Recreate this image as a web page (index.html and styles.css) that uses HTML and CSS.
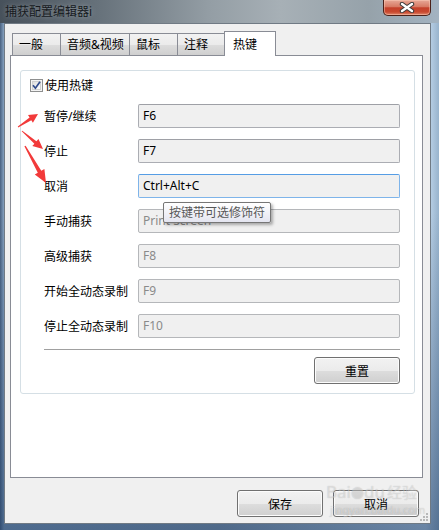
FILE: index.html
```html
<!DOCTYPE html>
<html lang="zh-CN">
<head>
    <meta charset="UTF-8">
    <meta name="viewport" content="width=device-width, initial-scale=1.0">
    <title>捕获配置编辑器</title>
    <link rel="stylesheet" href="styles.css">
</head>
<body>
    <div class="window">
        <div class="titlebar">
            <span class="title">捕获配置编辑器i</span>
            <div class="close-btn">
                <svg width="18" height="11" viewBox="0 0 18 11">
                    <path d="M4 2 L14 9 M14 2 L4 9" stroke="#3b3b3b" stroke-width="4.4" stroke-linecap="round"/>
                    <path d="M4 2 L14 9 M14 2 L4 9" stroke="#ffffff" stroke-width="2.4" stroke-linecap="round"/>
                </svg>
            </div>
        </div>

        <div class="client">
            <div class="tabs">
                <div class="tab tab-general">一般</div>
                <div class="tab tab-media">音频&amp;视频</div>
                <div class="tab tab-mouse">鼠标</div>
                <div class="tab tab-note">注释</div>
                <div class="tab tab-active">热键</div>
            </div>

            <div class="pane">
                <div class="groupbox">
                    <label class="check-row">
                        <svg class="checkbox" width="13" height="13" viewBox="0 0 13 13">
                            <defs>
                                <linearGradient id="cbg" x1="0" y1="0" x2="1" y2="1">
                                    <stop offset="0" stop-color="#dcdcdc"/>
                                    <stop offset="1" stop-color="#ffffff"/>
                                </linearGradient>
                            </defs>
                            <rect x="0.5" y="0.5" width="12" height="12" fill="#f4f4f4" stroke="#8e8f8f"/>
                            <rect x="2.5" y="2.5" width="8" height="8" fill="url(#cbg)" stroke="#d0d0d0"/>
                            <path d="M3 6.3 L5.4 9.2 L10 2.8" fill="none" stroke="#2f4a8c" stroke-width="1.7"/>
                        </svg>
                        <span>使用热键</span>
                    </label>

                    <div class="form">
                        <span class="label">暂停/继续</span>
                        <div class="field">F6</div>

                        <span class="label">停止</span>
                        <div class="field">F7</div>

                        <span class="label">取消</span>
                        <div class="field-wrap">
                            <div class="field focused">Ctrl+Alt+C</div>
                            <div class="tooltip">按键带可选修饰符</div>
                        </div>

                        <span class="label">手动捕获</span>
                        <div class="field disabled">Print Screen</div>

                        <span class="label">高级捕获</span>
                        <div class="field disabled">F8</div>

                        <span class="label">开始全动态录制</span>
                        <div class="field disabled">F9</div>

                        <span class="label">停止全动态录制</span>
                        <div class="field disabled">F10</div>
                    </div>

                    <div class="separator"></div>

                    <div class="reset-row">
                        <button class="btn">重置</button>
                    </div>
                </div>
            </div>

            <div class="footer">
                <button class="btn">保存</button>
                <button class="btn">取消</button>
            </div>
        </div>

        <!-- annotation arrows drawn on top of the dialog -->
        <svg class="arrows" width="439" height="530" viewBox="0 0 439 530">
            <polygon points="18.2,127.4 31.3,120.2 32.9,122.7 38,114 28,115.1 29.6,117.6 17.8,126.6" fill="#f23a3a"/>
            <polygon points="21.7,131.3 34.4,143.7 32.3,146.1 43,149 38.5,138.9 36.4,141.3 22.3,130.7" fill="#f23a3a"/>
            <polygon points="24.4,146.3 37.8,172.7 34.8,174.4 46,183 44.4,169 41.3,170.7 25.6,145.7" fill="#f23a3a"/>
        </svg>

        <div class="watermark">
            <div class="wm-logo">Bai<span class="wm-paw">&#9679;</span>du<span class="wm-cn">经验</span></div>
            <div class="wm-url">jingyan.baidu.com</div>
        </div>

        <svg class="grip" width="10" height="10" viewBox="0 0 10 10">
            <rect x="7" y="1" width="2" height="2" fill="#b8b8b8"/>
            <rect x="4" y="4" width="2" height="2" fill="#b8b8b8"/>
            <rect x="7" y="4" width="2" height="2" fill="#b8b8b8"/>
            <rect x="1" y="7" width="2" height="2" fill="#b8b8b8"/>
            <rect x="4" y="7" width="2" height="2" fill="#b8b8b8"/>
            <rect x="7" y="7" width="2" height="2" fill="#b8b8b8"/>
        </svg>
    </div>
</body>
</html>
```

FILE: styles.css
```css
body {
    margin: 0;
    font-family: "Noto Sans", "Noto Sans CJK SC", sans-serif;
    font-size: 12px;
    color: #000;
}
.window {
    position: relative;
    width: 439px;
    height: 530px;
    display: flex;
    flex-direction: column;
    overflow: hidden;
    background:
        linear-gradient(180deg, rgba(40, 70, 110, 0) 40%, rgba(30, 60, 100, 0.55) 100%),
        linear-gradient(90deg, #4a6281 0, #86a2c0 4px, #8aa0b6 50%, #c6dcf1 97%, #98b3cc 100%);
}
.titlebar {
    height: 23px;
    display: flex;
    align-items: flex-start;
    background: linear-gradient(90deg, #47515b 0%, #66717a 22%, #949ea5 48%, #a7b0b6 64%, #96a2aa 84%, #a3b3c1 100%);
}
.title {
    flex: 1;
    padding-left: 5px;
    line-height: 24px;
    color: #161a1e;
    text-shadow: 0 0 5px rgba(255, 255, 255, 0.35);
}
.close-btn {
    width: 46px;
    height: 15px;
    margin-right: 8px;
    display: flex;
    align-items: center;
    justify-content: center;
    border: 1px solid #4b2119;
    border-top: none;
    border-radius: 0 0 5px 5px;
    background: linear-gradient(180deg, #e7a897 0%, #d77a64 45%, #c4402a 52%, #c9492f 80%, #e08a6f 100%);
    box-shadow: inset 0 0 0 1px rgba(255, 210, 190, 0.45);
}
.client {
    flex: 1;
    margin: 0 8px 6px 4px;
    border: 1px solid #707a84;
    background: #f0f0f0;
    padding: 7px 7px 0 5px;
    display: flex;
    flex-direction: column;
}
.tabs {
    display: flex;
    height: 24px;
    margin-left: 2px;
    position: relative;
    z-index: 1;
}
.tab {
    box-sizing: border-box;
    height: 22px;
    margin-top: 2px;
    margin-right: -1px;
    padding-left: 6px;
    line-height: 21px;
    border: 1px solid #898c95;
    border-bottom: none;
    background: linear-gradient(180deg, #f2f2f2 0%, #ebebeb 50%, #dddddd 51%, #cfcfcf 100%);
}
.tab-general { width: 49px; }
.tab-media { width: 70px; }
.tab-mouse { width: 49px; }
.tab-note { width: 48px; }
.tab-active {
    width: 52px;
    height: 25px;
    margin-top: 0;
    padding-left: 8px;
    line-height: 26px;
    background: #fff;
}
.pane {
    height: 423px;
    box-sizing: border-box;
    border: 1px solid #898c95;
    background: #fff;
    padding: 14px 7px 0 9px;
}
.groupbox {
    border: 1px solid #d5dfe5;
    border-radius: 3px;
    padding: 8px 14px 9px 9px;
}
.check-row {
    display: flex;
    align-items: center;
    gap: 2px;
    height: 13px;
}
.checkbox {
    flex: none;
}
.check-row span {
    line-height: 13px;
    margin-top: -1px;
}
.form {
    display: grid;
    grid-template-columns: 94px 1fr;
    grid-auto-rows: 24px;
    row-gap: 11px;
    align-items: center;
    margin: 12px 0 0 14px;
}
.field-wrap {
    position: relative;
    height: 24px;
}
.field {
    box-sizing: border-box;
    height: 24px;
    padding-left: 4px;
    line-height: 22px;
    border: 1px solid #abadb3;
    border-top-color: #9ea0a6;
    border-radius: 2px;
    background: #f0f0f0;
}
.field.focused {
    border-color: #7eb4ea;
    border-top-color: #569de5;
}
.field.disabled {
    color: #8a8a8a;
    border-color: #b5b7ba;
}
.tooltip {
    position: absolute;
    left: 25px;
    top: 28px;
    height: 21px;
    box-sizing: border-box;
    padding: 0 5px;
    line-height: 19px;
    white-space: nowrap;
    color: #575757;
    border: 1px solid #767676;
    border-radius: 2px;
    background: linear-gradient(180deg, #ffffff 0%, #e4e5f0 100%);
    box-shadow: 2px 2px 3px rgba(0, 0, 0, 0.3);
}
.separator {
    height: 1px;
    margin: 11px 0 0 14px;
    background: #a0a0a0;
}
.reset-row {
    display: flex;
    justify-content: flex-end;
    margin-top: 7px;
}
.btn {
    box-sizing: border-box;
    width: 86px;
    height: 27px;
    padding: 0;
    font-family: "Noto Sans", "Noto Sans CJK SC", sans-serif;
    font-size: 12px;
    color: #000;
    border: 1px solid #707070;
    border-radius: 3px;
    background: linear-gradient(180deg, #f2f2f2 0%, #ebebeb 50%, #dddddd 51%, #cfcfcf 100%);
    box-shadow: inset 0 0 0 1px #fcfcfc;
}
.footer {
    display: flex;
    justify-content: flex-end;
    gap: 10px;
    margin: 12px 4px 0 0;
}
.arrows {
    position: absolute;
    top: 0;
    left: 0;
    pointer-events: none;
}
.watermark {
    position: absolute;
    left: 326px;
    top: 482px;
    color: rgba(255, 255, 255, 0.4);
    text-shadow: 0 0 1px rgba(0, 0, 0, 0.22);
    pointer-events: none;
}
.wm-logo {
    font-size: 17px;
    line-height: 20px;
}
.wm-paw {
    font-size: 13px;
}
.wm-cn {
    font-size: 15px;
    margin-left: 2px;
}
.wm-url {
    font-size: 11px;
    line-height: 13px;
    margin-left: 4px;
}
.grip {
    position: absolute;
    right: 10px;
    bottom: 8px;
}
```
